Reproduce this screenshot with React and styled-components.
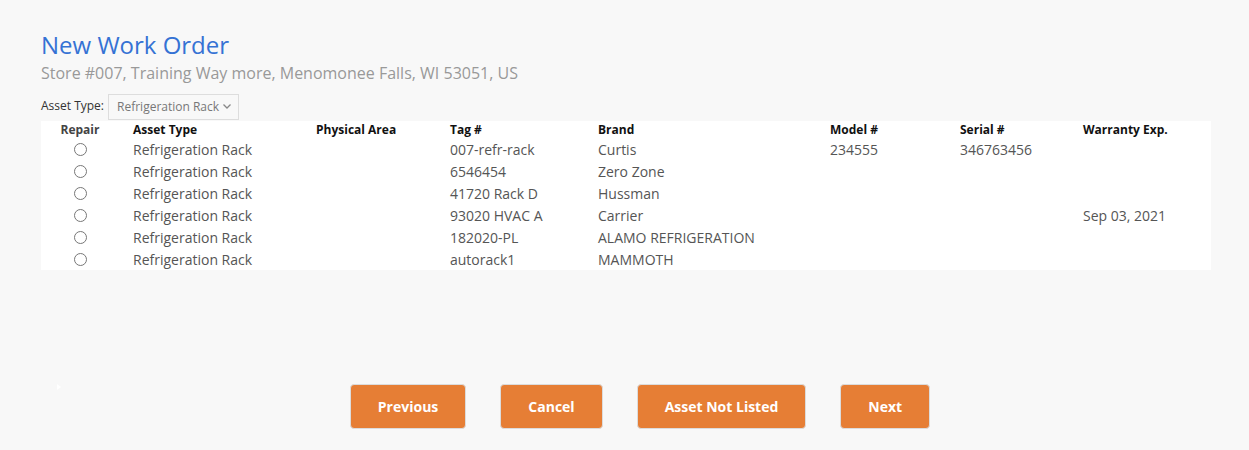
import React from "react";
import styled, { createGlobalStyle } from "styled-components";

const GlobalStyle = createGlobalStyle`
  html, body { margin: 0; padding: 0; background: #f8f8f8; }
  body { font-family: "Open Sans", "Liberation Sans", sans-serif; color: #555; }
`;

const Page = styled.div`
  width: 1249px;
  height: 450px;
  box-sizing: border-box;
  padding-top: 30px;
  overflow: hidden;
`;

const Main = styled.div`
  padding-left: 41px;
  width: 1170px;
`;

const Title = styled.h1`
  margin: 0;
  font-size: 24px;
  line-height: 30px;
  font-weight: 400;
  color: #3572d4;
`;

const Subtitle = styled.div`
  margin-top: 2px;
  font-size: 16px;
  line-height: 22px;
  color: #999;
`;

const FilterRow = styled.div`
  display: flex;
  align-items: center;
  gap: 4px;
  margin-top: 10px;
  height: 27px;
`;

const FilterLabel = styled.label`
  font-size: 12px;
  color: #333;
  line-height: 16px;
  margin-top: -3px;
`;

const SelectBox = styled.div`
  display: flex;
  align-items: center;
  justify-content: space-between;
  box-sizing: border-box;
  width: 131px;
  height: 26px;
  margin-top: -2px;
  padding: 0 6px 0 8px;
  border: 1px solid #ddd;
  background: #f8f8f8;
  font-size: 12px;
  color: #777;
`;

const Table = styled.div`
  background: #fff;
`;

const Row = styled.div`
  display: grid;
  grid-template-columns: 92px 183px 134px 148px 232px 130px 123px 128px;
  align-items: ${(p) => (p.$head ? "center" : "start")};
  box-sizing: border-box;
  padding-top: ${(p) => (p.$head ? "0" : "1px")};
  height: ${(p) => (p.$head ? "17px" : "22px")};
`;

const HeadCell = styled.div`
  font-size: 12px;
  font-weight: 700;
  color: ${(p) => (p.$muted ? "#444" : "#111")};
  line-height: 17px;
  white-space: nowrap;
  ${(p) => (p.$center ? "text-align: center; padding-right: 14px;" : "")}
`;

const Cell = styled.div`
  font-size: 14px;
  line-height: 21px;
  height: 21px;
  color: #555;
  white-space: nowrap;
  ${(p) =>
    p.$center ? "display: flex; align-items: center; justify-content: center; padding-right: 14px;" : ""}
`;

const Radio = styled.input.attrs({ type: "radio" })`
  appearance: none;
  margin: 0;
  width: 13px;
  height: 13px;
  border: 1px solid #777;
  border-radius: 50%;
  background: #fff;
  box-sizing: border-box;
`;

const Footer = styled.div`
  display: flex;
  margin-top: 114px;
`;

const Caret = styled.div`
  margin-left: 57px;
  width: 0;
  height: 0;
  border-top: 3px solid transparent;
  border-bottom: 3px solid transparent;
  border-left: 4px solid #fff;
`;

const ButtonGroup = styled.div`
  flex: 1;
  display: flex;
  justify-content: center;
  gap: 34px;
  padding-right: 30px;
`;

const Button = styled.button`
  height: 45px;
  padding: 0 27px;
  border: 1px solid #dcdcdc;
  border-radius: 4px;
  background: #e67e35;
  color: #fff;
  font-family: "Open Sans", "Liberation Sans", sans-serif;
  font-size: 14px;
  font-weight: 700;
  cursor: pointer;
`;

const rows = [
  { tag: "007-refr-rack", brand: "Curtis", model: "234555", serial: "346763456", warranty: "" },
  { tag: "6546454", brand: "Zero Zone", model: "", serial: "", warranty: "" },
  { tag: "41720 Rack D", brand: "Hussman", model: "", serial: "", warranty: "" },
  { tag: "93020 HVAC A", brand: "Carrier", model: "", serial: "", warranty: "Sep 03, 2021" },
  { tag: "182020-PL", brand: "ALAMO REFRIGERATION", model: "", serial: "", warranty: "" },
  { tag: "autorack1", brand: "MAMMOTH", model: "", serial: "", warranty: "" },
];

function Chevron() {
  return (
    <svg width="10" height="7" viewBox="0 0 10 7" fill="none">
      <path d="M1.5 1.5 L5 5 L8.5 1.5" stroke="#888" strokeWidth="1.3" />
    </svg>
  );
}

export default function App() {
  return (
    <>
      <GlobalStyle />
      <Page>
        <Main>
          <Title>New Work Order</Title>
          <Subtitle>Store #007, Training Way more, Menomonee Falls, WI 53051, US</Subtitle>
          <FilterRow>
            <FilterLabel>Asset Type:</FilterLabel>
            <SelectBox>
              <span>Refrigeration Rack</span>
              <Chevron />
            </SelectBox>
          </FilterRow>
          <Table>
            <Row $head>
              <HeadCell $center $muted>Repair</HeadCell>
              <HeadCell>Asset Type</HeadCell>
              <HeadCell>Physical Area</HeadCell>
              <HeadCell>Tag #</HeadCell>
              <HeadCell>Brand</HeadCell>
              <HeadCell>Model #</HeadCell>
              <HeadCell>Serial #</HeadCell>
              <HeadCell>Warranty Exp.</HeadCell>
            </Row>
            {rows.map((r) => (
              <Row key={r.tag}>
                <Cell $center>
                  <Radio name="asset" />
                </Cell>
                <Cell>Refrigeration Rack</Cell>
                <Cell></Cell>
                <Cell>{r.tag}</Cell>
                <Cell>{r.brand}</Cell>
                <Cell>{r.model}</Cell>
                <Cell>{r.serial}</Cell>
                <Cell>{r.warranty}</Cell>
              </Row>
            ))}
          </Table>
        </Main>
        <Footer>
          <Caret />
          <ButtonGroup>
            <Button>Previous</Button>
            <Button>Cancel</Button>
            <Button>Asset Not Listed</Button>
            <Button>Next</Button>
          </ButtonGroup>
        </Footer>
      </Page>
    </>
  );
}
